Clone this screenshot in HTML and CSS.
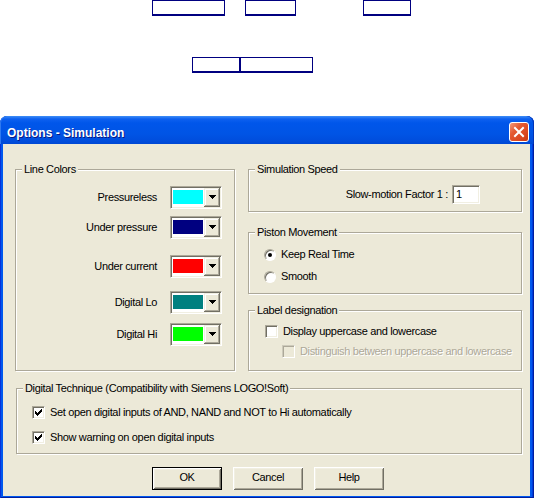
FILE: index.html
```html
<!DOCTYPE html>
<html>
<head>
<meta charset="utf-8">
<title>Options - Simulation</title>
<link rel="stylesheet" href="styles.css">
</head>
<body>
<div class="desk">
  <div class="strip strip-top">
    <span class="cell cell-a"></span>
    <span class="cell cell-b"></span>
    <span class="cell cell-c"></span>
  </div>
  <div class="strip strip-mid">
    <span class="cell cell-d"></span>
    <span class="cell cell-e"></span>
  </div>
</div>
<div class="window">
  <div class="titlebar">
    <span class="title">Options - Simulation</span>
    <span class="close"><svg width="18" height="18" viewBox="0 0 18 18"><path d="M5 5L13 13M13 5L5 13" stroke="#fff" stroke-width="2" stroke-linecap="square"/></svg></span>
  </div>
  <div class="client">
    <div class="upper">
      <section class="group colors">
        <span class="group-title">Line Colors</span>
        <div class="color-row"><span class="lbl">Pressureless</span><span class="combo"><span class="swatch sw-cyan"></span><span class="drop"><svg width="7" height="4" viewBox="0 0 7 4"><path d="M0 0h7v1H6v1H5v1H4v1H3V3H2V2H1V1H0z"/></svg></span></span></div>
        <div class="color-row"><span class="lbl">Under pressure</span><span class="combo"><span class="swatch sw-navy"></span><span class="drop"><svg width="7" height="4" viewBox="0 0 7 4"><path d="M0 0h7v1H6v1H5v1H4v1H3V3H2V2H1V1H0z"/></svg></span></span></div>
        <div class="color-row"><span class="lbl">Under current</span><span class="combo"><span class="swatch sw-red"></span><span class="drop"><svg width="7" height="4" viewBox="0 0 7 4"><path d="M0 0h7v1H6v1H5v1H4v1H3V3H2V2H1V1H0z"/></svg></span></span></div>
        <div class="color-row"><span class="lbl">Digital Lo</span><span class="combo"><span class="swatch sw-teal"></span><span class="drop"><svg width="7" height="4" viewBox="0 0 7 4"><path d="M0 0h7v1H6v1H5v1H4v1H3V3H2V2H1V1H0z"/></svg></span></span></div>
        <div class="color-row"><span class="lbl">Digital Hi</span><span class="combo"><span class="swatch sw-lime"></span><span class="drop"><svg width="7" height="4" viewBox="0 0 7 4"><path d="M0 0h7v1H6v1H5v1H4v1H3V3H2V2H1V1H0z"/></svg></span></span></div>
      </section>
      <div class="side">
        <section class="group speed">
          <span class="group-title">Simulation Speed</span>
          <div class="speed-row"><span>Slow-motion Factor&nbsp;1 :</span><span class="num">1</span></div>
        </section>
        <section class="group piston">
          <span class="group-title">Piston Movement</span>
          <div class="opt"><span class="radio on"></span><span>Keep Real Time</span></div>
          <div class="opt"><span class="radio"></span><span>Smooth</span></div>
        </section>
        <section class="group labels">
          <span class="group-title">Label designation</span>
          <div class="opt"><span class="check"></span><span>Display uppercase and lowercase</span></div>
          <div class="opt sub disabled"><span class="check"></span><span>Distinguish between uppercase and lowercase</span></div>
        </section>
      </div>
    </div>
    <section class="group digital">
      <span class="group-title">Digital Technique (Compatibility with Siemens LOGO!Soft)</span>
      <div class="opt"><span class="check"><svg width="7" height="7" viewBox="0 0 7 7"><path d="M0 2h1v3H0zM1 3h1v3H1zM2 4h1v3H2zM3 3h1v3H3zM4 2h1v3H4zM5 1h1v3H5zM6 0h1v3H6z"/></svg></span><span>Set open digital inputs of AND, NAND and NOT to Hi automatically</span></div>
      <div class="opt"><span class="check"><svg width="7" height="7" viewBox="0 0 7 7"><path d="M0 2h1v3H0zM1 3h1v3H1zM2 4h1v3H2zM3 3h1v3H3zM4 2h1v3H4zM5 1h1v3H5zM6 0h1v3H6z"/></svg></span><span>Show warning on open digital inputs</span></div>
    </section>
    <div class="buttons">
      <span class="btn default">OK</span>
      <span class="btn">Cancel</span>
      <span class="btn">Help</span>
    </div>
  </div>
</div>
</body>
</html>
```
FILE: styles.css
```css
html, body {
  margin: 0;
  height: 498px;
  overflow: hidden;
}
body {
  background: #fff;
  font-family: "Liberation Sans", Arial, sans-serif;
  font-size: 11px;
  line-height: 13px;
  letter-spacing: -0.35px;
  color: #000;
}

/* stray boxes on the page */
.desk { height: 116px; }
.strip { display: flex; }
.strip-top { padding-left: 152px; }
.strip-mid { padding-left: 192px; margin-top: 41px; }
.cell {
  display: block;
  box-sizing: border-box;
  height: 16px;
  border: 1px solid #000080;
  border-bottom-width: 2px;
}
.cell-a { width: 73px; }
.cell-b { width: 51px; margin-left: 20px; }
.cell-c { width: 48px; margin-left: 67px; }
.cell-d { width: 48px; }
.cell-e { width: 73px; }

/* window frame */
.window {
  height: 382px;
  box-sizing: border-box;
  padding-bottom: 2px;
  display: flex;
  flex-direction: column;
  background: #0058ee;
  border-radius: 8px 8px 0 0;
  box-shadow: inset 1px 0 #0831d9, inset -1px 0 #001ea0, inset 0 -1px #001ea0, inset -2px 0 #003bda;
}
.titlebar {
  height: 28px;
  flex: none;
  display: flex;
  justify-content: space-between;
  align-items: flex-start;
  padding: 0 5px 0 7px;
  border-radius: 7px 7px 0 0;
  background: linear-gradient(180deg, #3f8ef6 0px, #0d60f0 3px, #0056ea 7px, #0054e5 18px, #004ddc 25px, #0048d4 28px);
  box-shadow: inset 1px 0 #2f7af0, inset -1px 0 #0034b8;
  color: #fff;
}
.title {
  margin-top: 10px;
  font-family: "Liberation Sans", Arial, sans-serif;
  font-weight: bold;
  font-size: 12px;
  line-height: 14px;
  letter-spacing: 0;
  text-shadow: 1px 1px #0a1883;
}
.close {
  margin-top: 6px;
  width: 20px;
  height: 20px;
  box-sizing: border-box;
  border: 1px solid #fff;
  border-radius: 3px;
  background: linear-gradient(135deg, #f39a7b 0%, #e45a32 35%, #d9461f 75%, #c8380f 100%);
  display: flex;
  align-items: center;
  justify-content: center;
}
.close svg { display: block; }

.client {
  flex: 1;
  margin: 0 4px 0 3px;
  background: #ece9d8;
  padding: 25px 0 0 12px;
  box-sizing: border-box;
}
.upper {
  display: flex;
  gap: 13px;
}

/* group boxes */
.group {
  position: relative;
  box-sizing: border-box;
  border: 1px solid #aca899;
  box-shadow: inset 1px 1px #fff, 1px 1px #fff;
}
.group-title {
  position: absolute;
  left: 6px;
  top: -7px;
  padding: 0 2px;
  background: #ece9d8;
  white-space: nowrap;
}

/* line colors */
.colors {
  width: 220px;
  height: 202px;
  padding: 16px 12px 0 0;
}
.color-row {
  display: grid;
  grid-template-columns: 1fr 52px;
  column-gap: 13px;
  align-items: center;
}
.color-row:nth-of-type(2) { margin-top: 7px; }
.color-row:nth-of-type(3) { margin-top: 16px; }
.color-row:nth-of-type(4) { margin-top: 13px; }
.color-row:nth-of-type(5) { margin-top: 9px; }
.lbl { text-align: right; }
.combo {
  display: flex;
  width: 52px;
  height: 23px;
  box-sizing: border-box;
  padding: 1px;
  border: 1px solid;
  border-color: #aca899 #fff #fff #aca899;
  box-shadow: inset 1px 1px #716f64, inset -1px -1px #f1efe2;
  background: #fff;
}
.swatch {
  display: block;
  width: 30px;
  height: 14px;
  margin: 2px 1px 3px 1px;
}
.sw-cyan { background: #00ffff; }
.sw-navy { background: #000080; }
.sw-red { background: #ff0000; }
.sw-teal { background: #008080; }
.sw-lime { background: #00ff00; }
.drop {
  display: block;
  width: 16px;
  height: 19px;
  box-sizing: border-box;
  padding: 7px 0 0 5px;
  background: #ece9d8;
  box-shadow: inset -1px -1px #716f64, inset 1px 1px #f1efe2, inset -2px -2px #aca899, inset 2px 2px #fff;
}
.drop svg { display: block; }

/* right column */
.side {
  width: 274px;
  display: flex;
  flex-direction: column;
}
.speed {
  height: 43px;
  padding: 15px 41px 0 0;
}
.speed-row {
  display: flex;
  justify-content: flex-end;
  align-items: center;
  gap: 4px;
}
.num {
  display: block;
  width: 28px;
  height: 19px;
  box-sizing: border-box;
  padding: 2px 0 0 3px;
  border: 1px solid;
  border-color: #aca899 #fff #fff #aca899;
  box-shadow: inset 1px 1px #716f64, inset -1px -1px #f1efe2;
  background: #fff;
}
.piston {
  height: 62px;
  margin-top: 20px;
  padding: 15px 0 0 15px;
}
.labels {
  height: 61px;
  margin-top: 16px;
  padding: 14px 0 0 16px;
}
.opt {
  display: flex;
  align-items: center;
  gap: 5px;
  height: 13px;
  white-space: nowrap;
}
.opt + .opt { margin-top: 9px; }
.labels .opt + .opt { margin-top: 7px; }
.opt.sub { margin-left: 17px; }
.radio {
  display: flex;
  align-items: center;
  justify-content: center;
  width: 12px;
  height: 12px;
  box-sizing: border-box;
  border-radius: 50%;
  border: 1px solid;
  border-color: #aca899 #fff #fff #aca899;
  box-shadow: inset 1px 1px #716f64;
  background: #fff;
}
.radio.on::after {
  content: "";
  width: 4px;
  height: 4px;
  border-radius: 50%;
  background: #000;
}
.check {
  display: block;
  flex: none;
  width: 13px;
  height: 13px;
  box-sizing: border-box;
  padding: 2px 0 0 2px;
  border: 1px solid;
  border-color: #aca899 #fff #fff #aca899;
  box-shadow: inset 1px 1px #716f64, inset -1px -1px #f1efe2;
  background: #fff;
}
.check svg { display: block; }
.disabled { color: #aca899; text-shadow: 1px 1px #fff; }
.disabled .check {
  background: #ece9d8;
  border-color: #cdcabb #fff #fff #cdcabb;
  box-shadow: inset 1px 1px #aca899;
}

/* digital technique */
.digital {
  margin: 17px 0 0 1px;
  width: 506px;
  height: 66px;
  padding: 17px 0 0 15px;
}
.digital .opt + .opt { margin-top: 12px; }

/* dialog buttons */
.buttons {
  display: flex;
  gap: 11px;
  margin-top: 13px;
  padding-left: 137px;
}
.btn {
  display: flex;
  align-items: center;
  justify-content: center;
  width: 70px;
  height: 23px;
  box-sizing: border-box;
  padding-bottom: 2px;
  background: #ece9d8;
  box-shadow: inset 1px 1px #fff, inset -1px -1px #716f64, inset 2px 2px #f1efe2, inset -2px -2px #aca899;
}
.btn.default {
  border: 1px solid #000;
}
```
